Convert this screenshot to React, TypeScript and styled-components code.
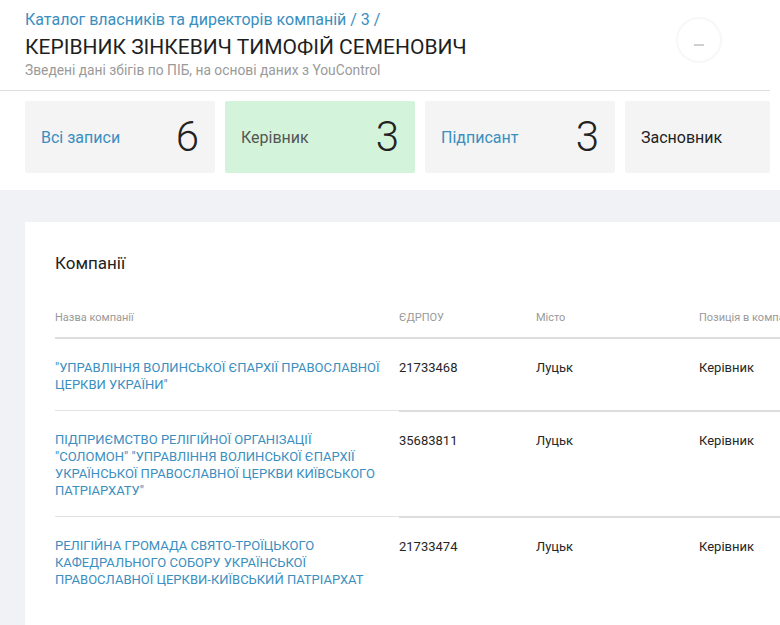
import styled, { createGlobalStyle } from "styled-components";

const GlobalStyle = createGlobalStyle`
  html, body {
    margin: 0;
    padding: 0;
    background: #f1f2f6;
    overflow: hidden;
  }
  body {
    font-family: Roboto, "Noto Sans", sans-serif;
    color: #222;
  }
`;

type Stat = { label: string; count?: number; active?: boolean; link?: boolean };
type Company = { name: string; code: string; city: string; role: string };

const stats: Stat[] = [
  { label: "Всі записи", count: 6, link: true },
  { label: "Керівник", count: 3, active: true },
  { label: "Підписант", count: 3, link: true },
  { label: "Засновник" },
];

const companies: Company[] = [
  {
    name: "\"УПРАВЛІННЯ ВОЛИНСЬКОЇ ЄПАРХІЇ ПРАВОСЛАВНОЇ ЦЕРКВИ УКРАЇНИ\"",
    code: "21733468",
    city: "Луцьк",
    role: "Керівник",
  },
  {
    name: "ПІДПРИЄМСТВО РЕЛІГІЙНОЇ ОРГАНІЗАЦІЇ \"СОЛОМОН\" \"УПРАВЛІННЯ ВОЛИНСЬКОЇ ЄПАРХІЇ УКРАЇНСЬКОЇ ПРАВОСЛАВНОЇ ЦЕРКВИ КИЇВСЬКОГО ПАТРІАРХАТУ\"",
    code: "35683811",
    city: "Луцьк",
    role: "Керівник",
  },
  {
    name: "РЕЛІГІЙНА ГРОМАДА СВЯТО-ТРОЇЦЬКОГО КАФЕДРАЛЬНОГО СОБОРУ УКРАЇНСЬКОЇ ПРАВОСЛАВНОЇ ЦЕРКВИ-КИЇВСЬКИЙ ПАТРІАРХАТ",
    code: "21733474",
    city: "Луцьк",
    role: "Керівник",
  },
];

// шапка
const Header = styled.header`
  background: #fff;
  width: 780px;
`;

const HeaderTop = styled.div`
  position: relative;
  padding: 10px 25px 12px;
  border-bottom: 1px solid #ddd;
  width: 720px;
`;

const Crumbs = styled.div`
  font-size: 16px;
  line-height: 20px;
  color: #3a8ec0;
`;

const Title = styled.h1`
  margin: 4px 0 0;
  font-size: 21px;
  line-height: 26px;
  font-weight: 400;
  color: #1f1f1f;
`;

const Sub = styled.div`
  margin-top: 2px;
  font-size: 13.8px;
  line-height: 16px;
  color: #9a9a9a;
`;

// кружок завантаження справа
const Spinner = styled.svg`
  position: absolute;
  left: 673px;
  top: 14px;
`;

const Cards = styled.div`
  display: flex;
  gap: 10px;
  padding: 10px 0 17px 25px;
  width: 745px;
`;

const Card = styled.div<{ $active?: boolean; $last?: boolean }>`
  box-sizing: border-box;
  width: 190px;
  flex: ${(p) => (p.$last ? "1 1 auto" : "0 0 190px")};
  height: 72px;
  padding: 0 16px;
  display: flex;
  align-items: center;
  justify-content: space-between;
  background: ${(p) => (p.$active ? "#d3f4da" : "#f4f4f4")};
  border-radius: 2px;
`;

const CardLabel = styled.span<{ $link?: boolean; $active?: boolean }>`
  font-size: 16px;
  color: ${(p) => (p.$link ? "#3a8ec0" : p.$active ? "#555" : "#222")};
`;

const CardCount = styled.span`
  font-size: 42px;
  line-height: 42px;
  font-weight: 300;
  color: #222;
`;

// основний блок
const Main = styled.main`
  padding: 32px 0 0 25px;
`;

const Panel = styled.section`
  background: #fff;
  width: 975px;
  padding: 30px 30px 40px;
  min-height: 400px;
`;

const PanelTitle = styled.h2`
  margin: 0;
  font-size: 17px;
  line-height: 22px;
  font-weight: 400;
  color: #222;
`;

const Table = styled.table`
  margin-top: 37px;
  border-collapse: collapse;
  width: 900px;
  table-layout: fixed;
`;

const Th = styled.th<{ $w: number }>`
  width: ${(p) => p.$w}px;
  text-align: left;
  font-size: 11px;
  font-weight: 400;
  color: #999;
  padding: 0 0 13px;
  border-bottom: 2px solid #ddd;
`;

const Row = styled.tr`
  &:last-child td {
    border-bottom: none;
  }
`;

const Td = styled.td<{ $name?: boolean }>`
  vertical-align: top;
  padding: 20px 14px 17px 0;
  font-size: 13px;
  line-height: 17px;
  color: #262626;
  border-bottom: ${(p) => (p.$name ? "1px solid #e2e2e2" : "2px solid #ddd")};
`;

const NameLink = styled.a`
  color: #3a8ec0;
  text-decoration: none;
`;

export default function App() {
  return (
    <>
      <GlobalStyle />
      <Header>
        <HeaderTop>
          <Crumbs>Каталог власників та директорів компаній / 3 /</Crumbs>
          <Title>КЕРІВНИК ЗІНКЕВИЧ ТИМОФІЙ СЕМЕНОВИЧ</Title>
          <Sub>Зведені дані збігів по ПІБ, на основі даних з YouControl</Sub>
          <Spinner width="52" height="52" viewBox="0 0 52 52">
            <circle cx="26" cy="26" r="22" fill="none" stroke="#f7f7f7" strokeWidth="2" />
            <line x1="21" y1="31" x2="31" y2="31" stroke="#a0a0a0" strokeWidth="1" />
          </Spinner>
        </HeaderTop>
        <Cards>
          {stats.map((s, i) => (
            <Card key={s.label} $active={s.active} $last={i === stats.length - 1}>
              <CardLabel $link={s.link} $active={s.active}>
                {s.label}
              </CardLabel>
              {s.count !== undefined && <CardCount>{s.count}</CardCount>}
            </Card>
          ))}
        </Cards>
      </Header>
      <Main>
        <Panel>
          <PanelTitle>Компанії</PanelTitle>
          <Table>
            <thead>
              <tr>
                <Th $w={344}>Назва компанії</Th>
                <Th $w={137}>ЄДРПОУ</Th>
                <Th $w={163}>Місто</Th>
                <Th $w={256}>Позиція в компанії</Th>
              </tr>
            </thead>
            <tbody>
              {companies.map((c) => (
                <Row key={c.code}>
                  <Td $name>
                    <NameLink href="#">{c.name}</NameLink>
                  </Td>
                  <Td>{c.code}</Td>
                  <Td>{c.city}</Td>
                  <Td>{c.role}</Td>
                </Row>
              ))}
            </tbody>
          </Table>
        </Panel>
      </Main>
    </>
  );
}
